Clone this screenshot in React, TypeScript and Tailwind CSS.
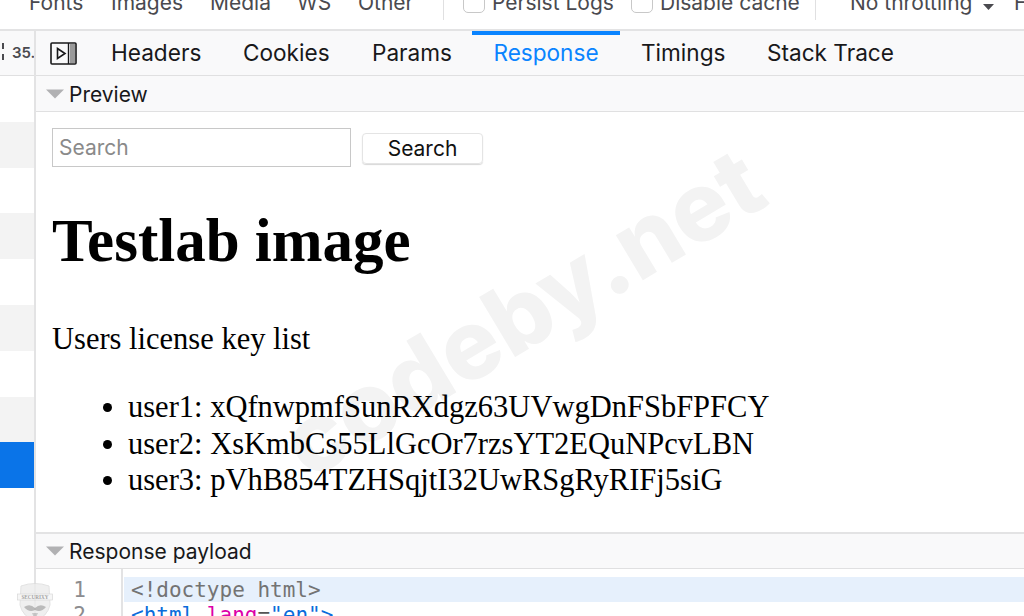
const sans = "font-['Inter','Roboto','Liberation_Sans',sans-serif]";

function Caret() {
  return (
    <svg width="18" height="10" viewBox="0 0 18 10" className="shrink-0">
      <path d="M0 0.5 H18 L9 9.5 Z" fill="#b1b1b3" />
    </svg>
  );
}

function Check() {
  return <span className="block w-[22px] h-[26px] -mt-[13px] rounded-[5px] border border-[#c8c8c8] bg-white shrink-0" />;
}

function SectionHeader({ label, className }: { label: string; className: string }) {
  return (
    <div className={`flex items-center shrink-0 bg-[#f9f9fa] border-b border-[#e0e0e1] pl-[10px] gap-[5px] text-[#18181a] text-[21px] ${className}`}>
      <Caret />
      <span className="pt-[2px]">{label}</span>
    </div>
  );
}

function Mask() {
  return (
    <svg width="36" height="40" viewBox="0 0 36 40" className="opacity-80">
      <path d="M4 3 Q18 -2 32 3 L33 22 Q30 34 18 38 Q6 34 3 22 Z" fill="#ececec" stroke="#dcdcdc" />
      <rect x="0.5" y="11" width="35" height="6" fill="#f5f5f5" stroke="#c9c9c9" strokeWidth="0.6" />
      <text x="18" y="16" textAnchor="middle" fontSize="5.2" fontWeight="700" fill="#8b8b8b" fontFamily="Liberation Serif, serif">SECURIXY</text>
      <path d="M7 24 Q13 20 18 25 Q23 20 29 24 Q24 30 18 27 Q12 30 7 24 Z" fill="#a9a9a9" />
      <path d="M15 30 L18 37 L21 30 Z" fill="#bcbcbc" />
    </svg>
  );
}

export default function App() {
  const rows = ["bg-white", "bg-[#f3f3f3]", "bg-white", "bg-[#f3f3f3]", "bg-white", "bg-[#f3f3f3]", "bg-white", "bg-[#f3f3f3]", "bg-[#0a74e8]", "bg-white"];
  return (
    <div className={`relative w-[1024px] h-[616px] overflow-hidden bg-white flex flex-col ${sans}`}>
      {/* top toolbar, cut off by the crop */}
      <div className="h-[29px] shrink-0 overflow-hidden flex items-start text-[21px] leading-[24px] text-[#4a4a4f] whitespace-nowrap pl-[29px]">
        <div className="flex items-center -mt-[9px] shrink-0">
          <span className="w-[82px] shrink-0">Fonts</span>
          <span className="w-[99px] shrink-0">Images</span>
          <span className="w-[87px] shrink-0">Media</span>
          <span className="w-[61px] shrink-0">WS</span>
          <span className="w-[85px] shrink-0">Other</span>
        </div>
        <span className="block w-px h-[20px] bg-[#e0e0e1] shrink-0" />
        <span className="w-[19px] shrink-0" />
        <Check />
        <span className="-mt-[9px] ml-[7px] w-[139px] shrink-0">Persist Logs</span>
        <Check />
        <span className="-mt-[9px] ml-[7px] w-[148px] shrink-0">Disable cache</span>
        <span className="block w-px h-[20px] bg-[#e0e0e1] ml-[7px] shrink-0" />
        <span className="-mt-[9px] ml-[34px] w-[133px] shrink-0">No throttling</span>
        <svg width="11" height="6" viewBox="0 0 11 6" className="mt-[4px] shrink-0"><path d="M0 0 H11 L5.5 6 Z" fill="#4a4a4f" /></svg>
        <span className="-mt-[9px] ml-[20px] shrink-0">F</span>
      </div>

      <div className="flex-1 min-h-0 flex border-t-2 border-[#e3e3e4]">
        {/* request list strip */}
        <div className="w-[36px] shrink-0 border-r-2 border-[#e3e3e4] flex flex-col overflow-hidden">
          <div className="h-[45px] shrink-0 bg-[#f9f9fa] border-b border-[#e0e0e1] flex items-center justify-end text-[15px] font-semibold text-[#4a4a4f] whitespace-nowrap">
            <span className="block w-[2px] h-[20px] mr-[8px] shrink-0 bg-[repeating-linear-gradient(#4a4a4f_0_6px,transparent_6px_11px)]" />
            <span className="w-[22px] shrink-0 overflow-hidden">35.</span>
          </div>
          {rows.map((c, i) => (
            <div key={i} className={`h-[45.8px] shrink-0 ${c}`} />
          ))}
        </div>

        {/* details */}
        <div className="flex-1 min-w-0 flex flex-col">
          <div className="h-[45px] shrink-0 bg-[#f9f9fa] border-b border-[#e0e0e1] flex items-stretch text-[#18181a] text-[22.6px] whitespace-nowrap">
            <div className="w-[75px] shrink-0 flex items-center pl-[14px]">
              <svg width="27" height="23" viewBox="0 0 27 23">
                <rect x="1" y="1" width="25" height="21" rx="1" fill="none" stroke="#18181a" strokeWidth="1.6" />
                <rect x="20" y="2" width="5" height="19" fill="#9a9a9a" />
                <path d="M18.5 1 V22" stroke="#18181a" strokeWidth="1.4" />
                <path d="M7.5 6.5 L15 11.5 L7.5 16.5 Z" fill="none" stroke="#18181a" strokeWidth="1.6" />
              </svg>
            </div>
            <span className="w-[132px] shrink-0 flex items-center">Headers</span>
            <span className="w-[129px] shrink-0 flex items-center">Cookies</span>
            <span className="w-[100px] shrink-0 flex items-center">Params</span>
            <span className="w-[148px] shrink-0 flex items-center justify-center text-[#0a84ff] border-t-[4px] border-[#0a84ff] pb-[4px]">Response</span>
            <span className="w-[126px] shrink-0 ml-[21px] flex items-center">Timings</span>
            <span className="flex items-center shrink-0">Stack Trace</span>
          </div>
          <SectionHeader label="Preview" className="h-[36px]" />

          <div className="relative flex-1 min-h-0 overflow-hidden pl-[16px] font-['Liberation_Serif',serif] text-black">
            <div aria-hidden className={`absolute left-[486px] top-[200px] -translate-x-1/2 -translate-y-1/2 -rotate-[31deg] text-[96px] leading-none font-extrabold text-[#f3f3f3] whitespace-nowrap ${sans}`}>
              codeby.net
            </div>
            <div className="relative">
              <div className="flex items-start pt-[16px]">
                <div className={`w-[299px] h-[39px] border border-[#c8c8c8] pl-[6px] pt-[1px] flex items-center text-[21px] text-[#8a8a8a] ${sans}`}>Search</div>
                <div className={`ml-[11px] w-[121px] h-[31px] mt-[5px] rounded-[4px] border border-[#e4e4e4] shadow-[0_1px_1px_#d8d8d8] flex items-center justify-center text-[21px] text-[#111] ${sans}`}>Search</div>
              </div>
              <h1 className="mt-[40px] text-[61px] leading-[68px] font-bold">Testlab image</h1>
              <p className="mt-[46px] text-[30.5px] leading-[37px]">Users license key list</p>
              <ul className="mt-[31px] pl-[76px] text-[30.5px] leading-[36.5px] list-disc">
                <li>user1: xQfnwpmfSunRXdgz63UVwgDnFSbFPFCY</li>
                <li>user2: XsKmbCs55LlGcOr7rzsYT2EQuNPcvLBN</li>
                <li>user3: pVhB854TZHSqjtI32UwRSgRyRIFj5siG</li>
              </ul>
            </div>
          </div>

          <SectionHeader label="Response payload" className="h-[37px] border-t-2 border-t-[#e3e3e4]" />
          <div className="h-[47px] shrink-0 flex overflow-hidden font-['DejaVu_Sans_Mono',monospace] text-[21px] leading-[27px] whitespace-pre">
            <div className="w-[87px] shrink-0 border-r-2 border-[#e3e3e4] pt-[8px] text-right pr-[35px] text-[#8c8c8f]">
              <div className="h-[25px]">1</div>
              <div>2</div>
            </div>
            <div className="flex-1 min-w-0 pt-[8px] pl-[1px]">
              <div className="h-[25px] bg-[#e6f0fc] pl-[7px] text-[#737373]">{"<!doctype html>"}</div>
              <div className="pl-[7px]">
                <span className="text-[#0a6cdb]">{"<html "}</span>
                <span className="text-[#dd00a9]">lang</span>
                <span className="text-[#555]">=</span>
                <span className="text-[#0a6cdb]">{'"en">'}</span>
              </div>
            </div>
          </div>
        </div>
      </div>

      <div className="absolute left-[17px] top-[583px]"><Mask /></div>
    </div>
  );
}
